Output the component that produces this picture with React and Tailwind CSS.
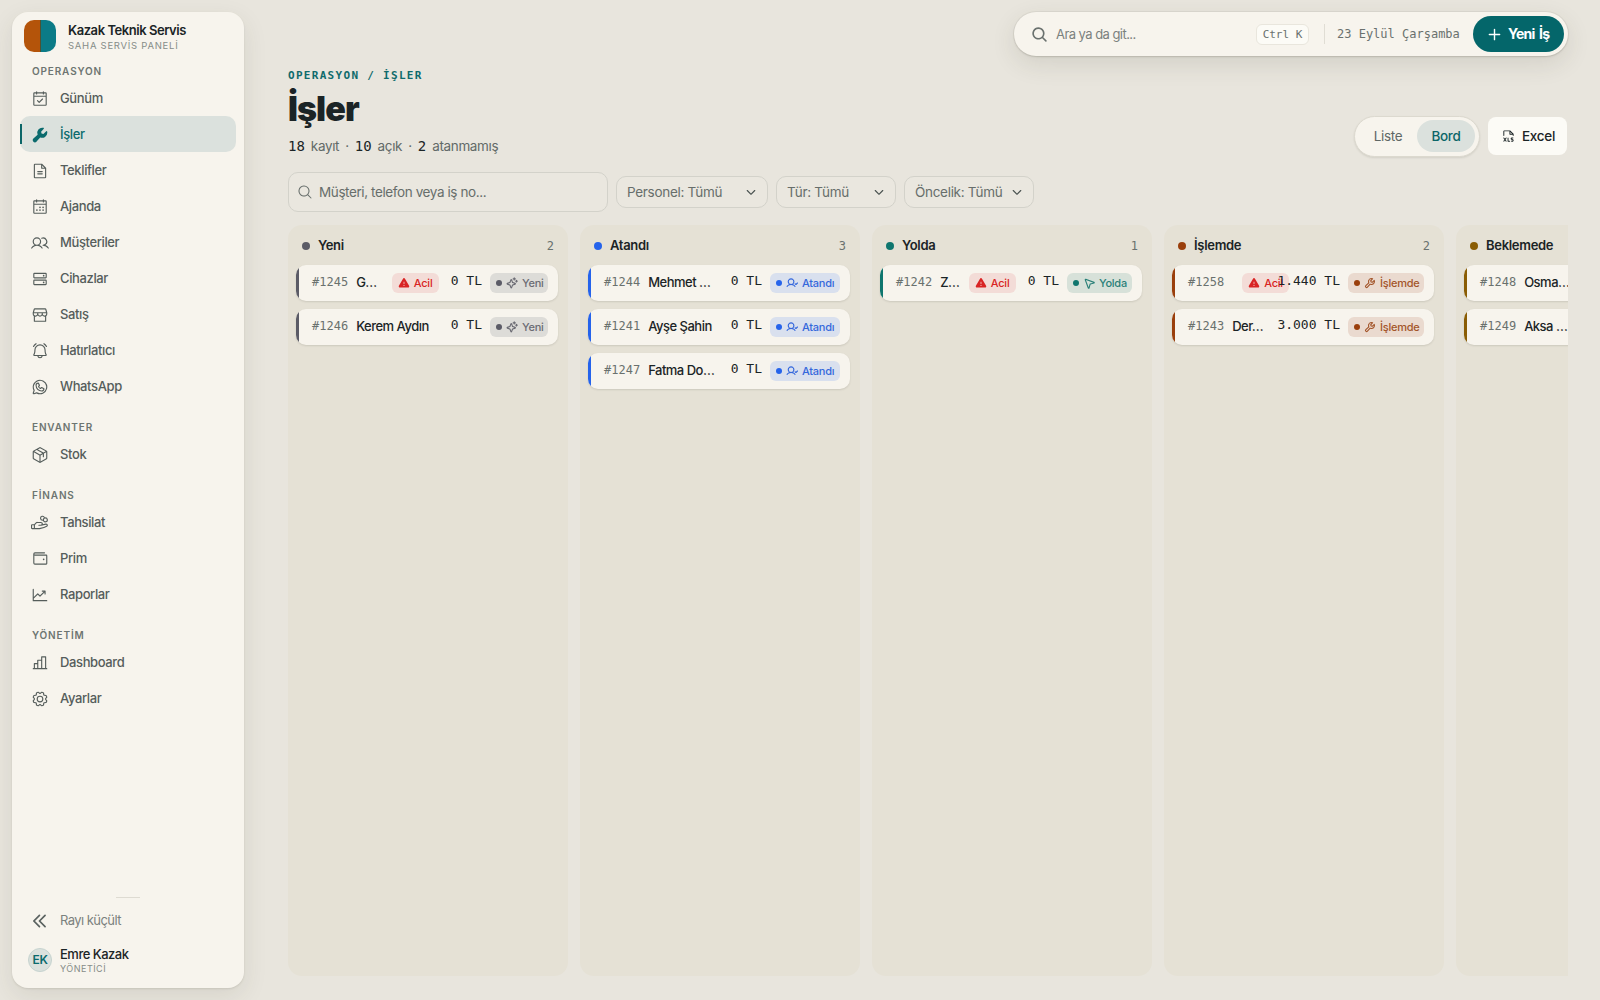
import React from 'react';
import clsx from 'clsx';
import {
    PiCalendarCheck, PiWrenchFill, PiFileText, PiCalendarDots, PiUsers, PiHardDrives,
    PiStorefront, PiBellRinging, PiWhatsappLogo, PiPackage, PiHandCoins, PiWallet,
    PiChartLineUp, PiChartBar, PiGear, PiCaretDoubleLeftBold, PiMagnifyingGlass,
    PiMagnifyingGlassBold, PiPlusBold, PiFileXls, PiCaretDownBold, PiWarningFill,
    PiSparkleBold, PiUserCheckBold, PiNavigationArrowBold, PiWrenchBold, PiHourglassBold
} from 'react-icons/pi';

const NAV = [
    {
        title: 'OPERASYON',
        items: [
            { label: 'Günüm', icon: PiCalendarCheck },
            { label: 'İşler', icon: PiWrenchFill, active: true },
            { label: 'Teklifler', icon: PiFileText },
            { label: 'Ajanda', icon: PiCalendarDots },
            { label: 'Müşteriler', icon: PiUsers },
            { label: 'Cihazlar', icon: PiHardDrives },
            { label: 'Satış', icon: PiStorefront },
            { label: 'Hatırlatıcı', icon: PiBellRinging },
            { label: 'WhatsApp', icon: PiWhatsappLogo },
        ],
    },
    { title: 'ENVANTER', items: [{ label: 'Stok', icon: PiPackage }] },
    {
        title: 'FİNANS',
        items: [
            { label: 'Tahsilat', icon: PiHandCoins },
            { label: 'Prim', icon: PiWallet },
            { label: 'Raporlar', icon: PiChartLineUp },
        ],
    },
    {
        title: 'YÖNETİM',
        items: [
            { label: 'Dashboard', icon: PiChartBar },
            { label: 'Ayarlar', icon: PiGear },
        ],
    },
];

const STATUS = {
    yeni: { label: 'Yeni', icon: PiSparkleBold, solid: 'bg-[#5b5b66]', badge: 'bg-[#dddcd8] text-[#6b6b73]', width: 'w-[58px]' },
    atandi: { label: 'Atandı', icon: PiUserCheckBold, solid: 'bg-[#2563eb]', badge: 'bg-[#d9e0ee] text-[#3568dc]', width: 'w-[70px]' },
    yolda: { label: 'Yolda', icon: PiNavigationArrowBold, solid: 'bg-[#0f766e]', badge: 'bg-[#d7e1d9] text-[#2a8078]', width: 'w-[65px]' },
    islemde: { label: 'İşlemde', icon: PiWrenchBold, solid: 'bg-[#9a3f0c]', badge: 'bg-[#eadacf] text-[#a3552a]', width: 'w-[76px]' },
    beklemede: { label: 'Beklemede', icon: PiHourglassBold, solid: 'bg-[#8a5d05]', badge: 'bg-[#e8dfcb] text-[#8a5d05]', width: 'w-[92px]' },
};

const COLUMNS = [
    {
        title: 'Yeni', status: 'yeni', jobs: [
            { no: '#1245', name: 'G…', total: '0 TL', urgent: true },
            { no: '#1246', name: 'Kerem Aydın', total: '0 TL' },
        ],
    },
    {
        title: 'Atandı', status: 'atandi', jobs: [
            { no: '#1244', name: 'Mehmet …', total: '0 TL' },
            { no: '#1241', name: 'Ayşe Şahin', total: '0 TL' },
            { no: '#1247', name: 'Fatma Do…', total: '0 TL' },
        ],
    },
    { title: 'Yolda', status: 'yolda', jobs: [{ no: '#1242', name: 'Z…', total: '0 TL', urgent: true }] },
    {
        title: 'İşlemde', status: 'islemde', jobs: [
            { no: '#1258', name: '', total: '1.440 TL', urgent: true },
            { no: '#1243', name: 'Der…', total: '3.000 TL' },
        ],
    },
    {
        title: 'Beklemede', status: 'beklemede', jobs: [
            { no: '#1248', name: 'Osma…', total: '0 TL' },
            { no: '#1249', name: 'Aksa …', total: '0 TL' },
        ],
    },
];

const MONO = "font-['DejaVu_Sans_Mono',monospace]";

const App = () => {
    return (
        <div className="h-[1000px] w-[1600px] flex overflow-hidden bg-[#e8e5dd] font-['Inter',sans-serif] text-[#1b2426]">
            <Sidebar />

            <main className="flex-1 min-w-0 flex flex-col pl-11 pr-8 pt-3 pb-6">
                <TopBar />

                {/* Page heading */}
                <div className="flex justify-between mt-[13px]">
                    <div>
                        <div className={`${MONO} text-[11px] leading-[14px] font-bold tracking-[1.3px] text-[#0f6b6c]`}>OPERASYON / İŞLER</div>
                        <h1 className="text-[34px] leading-[40px] mt-[6px] font-black tracking-[-0.9px]">İşler</h1>
                        <p className="flex items-center gap-[6px] h-5 mt-[7px] text-[13.5px] tracking-[-0.35px] text-[#626a68]">
                            <Count>18</Count> kayıt <span>·</span> <Count>10</Count> açık <span>·</span> <Count>2</Count> atanmamış
                        </p>
                    </div>
                    <div className="flex items-center gap-2 h-[42px] mt-[46px] mr-px">
                        <div className="flex items-center h-[41px] w-[126px] p-1 rounded-full bg-[#f7f4ed] border border-[#dcd9cf] shadow-[0_1px_2px_rgba(60,55,40,0.12)] text-[13.5px] tracking-[-0.3px]">
                            <button className="flex-1 text-[#5f6765]">Liste</button>
                            <button className="w-[58px] h-8 rounded-full bg-[#dbe1dd] text-[#0b6668] font-medium">Bord</button>
                        </div>
                        <button className="flex items-center gap-[6px] h-[38px] w-[79px] pl-[13px] rounded-lg bg-[#fcfbf6] text-[13.5px] font-medium tracking-[-0.3px]">
                            <PiFileXls size={15} className="shrink-0" />
                            Excel
                        </button>
                    </div>
                </div>

                {/* Filters */}
                <div className="flex items-center gap-2 h-10 mt-[15px]">
                    <div className="flex items-center gap-[6px] w-80 h-10 pl-2 rounded-[10px] border border-[#d3d2ca] bg-[#eae7df] text-[13.5px] tracking-[-0.4px] text-[#676e6b]">
                        <PiMagnifyingGlass size={16} />
                        Müşteri, telefon veya iş no...
                    </div>
                    <Select label="Personel: Tümü" className="w-[152px]" />
                    <Select label="Tür: Tümü" className="w-[120px]" />
                    <Select label="Öncelik: Tümü" className="w-[130px]" />
                </div>

                {/* Board */}
                <div className="flex-1 min-h-0 flex gap-3 mt-[13px] overflow-hidden">
                    {COLUMNS.map((col) => <Column key={col.status} {...col} />)}
                </div>
            </main>
        </div>
    );
};

const Sidebar = () => (
    <aside className="w-[232px] h-[976px] ml-3 mt-3 shrink-0 flex flex-col px-2 rounded-2xl bg-[#f7f4ed] shadow-[0_1px_2px_rgba(60,55,40,0.12),0_8px_24px_rgba(60,55,40,0.10)]">
        <div className="flex items-center gap-3 h-[50px] pl-1 pb-[2px]">
            <div className="w-8 h-8 rounded-[10px] overflow-hidden flex">
                <div className="flex-1 bg-[#b4540a]"></div>
                <div className="w-px bg-[#4d5234]"></div>
                <div className="flex-1 bg-[#0b7b87]"></div>
            </div>
            <div className="pt-0.5">
                <div className="text-[13px] leading-4 font-semibold tracking-[-0.45px]">Kazak Teknik Servis</div>
                <div className="text-[9.5px] leading-[15px] tracking-[0.73px] text-[#868c88]">SAHA SERVİS PANELİ</div>
            </div>
        </div>
        <nav>
            {NAV.map((group, i) => (
                <div key={group.title} className={clsx(i > 0 && 'mt-3.5')}>
                    <h2 className="h-[18px] leading-[18px] pl-3 text-[10px] font-semibold tracking-[0.85px] text-[#6d7571]">{group.title}</h2>
                    {group.items.map((item) => <NavItem key={item.label} {...item} />)}
                </div>
            ))}
        </nav>
        <div className="mt-auto flex flex-col">
            <div className="w-6 h-px self-center bg-[#dedbd2]"></div>
            <button className="flex items-center gap-[11px] h-9 pl-[11px] mt-[5px] text-[13px] tracking-[-0.55px] text-[#7b817e]">
                <PiCaretDoubleLeftBold size={18} className="text-[#5a6260]" />
                Rayı küçült
            </button>
            <div className="flex items-center gap-2 h-10 pl-2 mt-px mb-2">
                <div className="w-6 h-6 rounded-full bg-[#dbe1dd] border border-[#c6d3cf] flex items-center justify-center text-xs tracking-[-0.4px] font-semibold text-[#0b6b6d]">EK</div>
                <div className="pt-0.5">
                    <div className="text-[13px] leading-4 font-medium tracking-[-0.5px]">Emre Kazak</div>
                    <div className="text-[9px] leading-[14px] tracking-[0.5px] text-[#868c88]">YÖNETİCİ</div>
                </div>
            </div>
        </div>
    </aside>
);

const NavItem = ({ label, icon: Icon, active }) => (
    <a
        className={clsx(
            'relative flex items-center gap-[11px] h-9 pl-[11px] pt-0.5 rounded-[10px] text-[13px] font-[450] tracking-[-0.38px]',
            active ? 'bg-[#dbe1dd] text-[#0b6b6d]' : 'text-[#555d5b]'
        )}
    >
        {active && <span className="absolute left-0 top-2 h-5 w-[2px] bg-[#0b6668]"></span>}
        <Icon size={18} className="shrink-0" />
        {label}
    </a>
);

const TopBar = () => (
    <div className="self-end flex items-center w-[554px] h-11 pl-[17px] pr-1 rounded-full bg-[#f7f4ed] shadow-[0_0_0_1px_rgba(60,55,40,0.05),0_1px_2px_rgba(60,55,40,0.15),0_8px_24px_rgba(60,55,40,0.12)]">
        <PiMagnifyingGlassBold size={17} className="text-[#6a716e]" />
        <span className="ml-2 pt-0.5 text-[13px] tracking-[-0.55px] text-[#7b817e]">Ara ya da git...</span>
        <kbd className={`${MONO} ml-auto w-[53px] h-[21px] leading-[19px] text-center rounded-md border border-[#e9e6dd] bg-[#fcfbf6] text-[11px] text-[#6a716e]`}>Ctrl K</kbd>
        <div className="w-px h-5 ml-[15px] mr-3 bg-[#e0ddd4]"></div>
        <span className={`${MONO} w-[123px] text-xs whitespace-nowrap text-[#6a716e]`}>23 Eylül Çarşamba</span>
        <button className="ml-[13px] flex items-center gap-[6px] w-[91px] h-9 pl-[14px] rounded-full bg-[#04666a] text-white text-sm font-bold tracking-[-0.75px] [word-spacing:2px] whitespace-nowrap">
            <PiPlusBold size={15} className="shrink-0" />
            Yeni İş
        </button>
    </div>
);

const Count = ({ children }) => (
    <span className={`${MONO} text-sm text-[#1b2426] tracking-normal`}>{children}</span>
);

const Select = ({ label, className }) => (
    <div className={clsx('flex items-center justify-between h-8 px-[10px] rounded-[10px] border border-[#d3d2ca] bg-[#eae7df] text-[13.5px] tracking-[-0.3px] text-[#676e6b] whitespace-nowrap', className)}>
        {label}
        <PiCaretDownBold size={12} className="shrink-0 text-[#4a5250]" />
    </div>
);

const Column = ({ title, status, jobs }) => (
    <section className="w-[280px] shrink-0 rounded-[14px] bg-[#e5e1d5] pl-2 pr-[10px]">
        <header className="flex items-center h-10 pt-px pl-[6px] pr-1">
            <span className={clsx('w-2 h-2 rounded-full', STATUS[status].solid)}></span>
            <h3 className="ml-2 text-[13px] font-semibold tracking-[-0.3px]">{title}</h3>
            <span className={`${MONO} ml-auto text-xs text-[#6a716e]`}>{jobs.length}</span>
        </header>
        <div className="flex flex-col gap-2">
            {jobs.map((job) => <JobCard key={job.no} status={status} {...job} />)}
        </div>
    </section>
);

const JobCard = ({ no, name, total, urgent, status }) => {
    const { label, icon: Icon, solid, badge, width } = STATUS[status];
    return (
        <article className="flex items-center h-9 pr-[10px] rounded-[10px] overflow-hidden bg-[#f7f4ed] shadow-[0_1px_2px_rgba(60,55,40,0.14)] whitespace-nowrap">
            <span className={clsx('w-[3px] h-full mr-[13px] shrink-0', solid)}></span>
            <span className={`${MONO} text-xs text-[#6a716e] -mt-0.5`}>{no}</span>
            <div className="flex-1 min-w-0 flex items-center gap-[10px] ml-2">
                <span className="flex-1 min-w-0 text-[13px] font-medium tracking-[-0.5px]">{name}</span>
                {urgent && (
                    <span className="w-[47px] h-5 shrink-0 flex items-center gap-1 pl-[6px] rounded-md bg-[#f3dcd7] text-[#d92424] text-[11px] font-medium tracking-[-0.2px]">
                        <PiWarningFill size={12} className="shrink-0" />
                        Acil
                    </span>
                )}
            </div>
            <span className={`${MONO} ml-3 text-[13px] -mt-1`}>{total}</span>
            <span className={clsx('ml-2 h-5 shrink-0 flex items-center pl-[6px] rounded-md text-[11px] font-[450] tracking-[-0.25px]', badge, width)}>
                <span className={clsx('w-1.5 h-1.5 rounded-full', solid)}></span>
                <Icon size={12} className="ml-1 mr-1 shrink-0" />
                {label}
            </span>
        </article>
    );
};

export default App;
